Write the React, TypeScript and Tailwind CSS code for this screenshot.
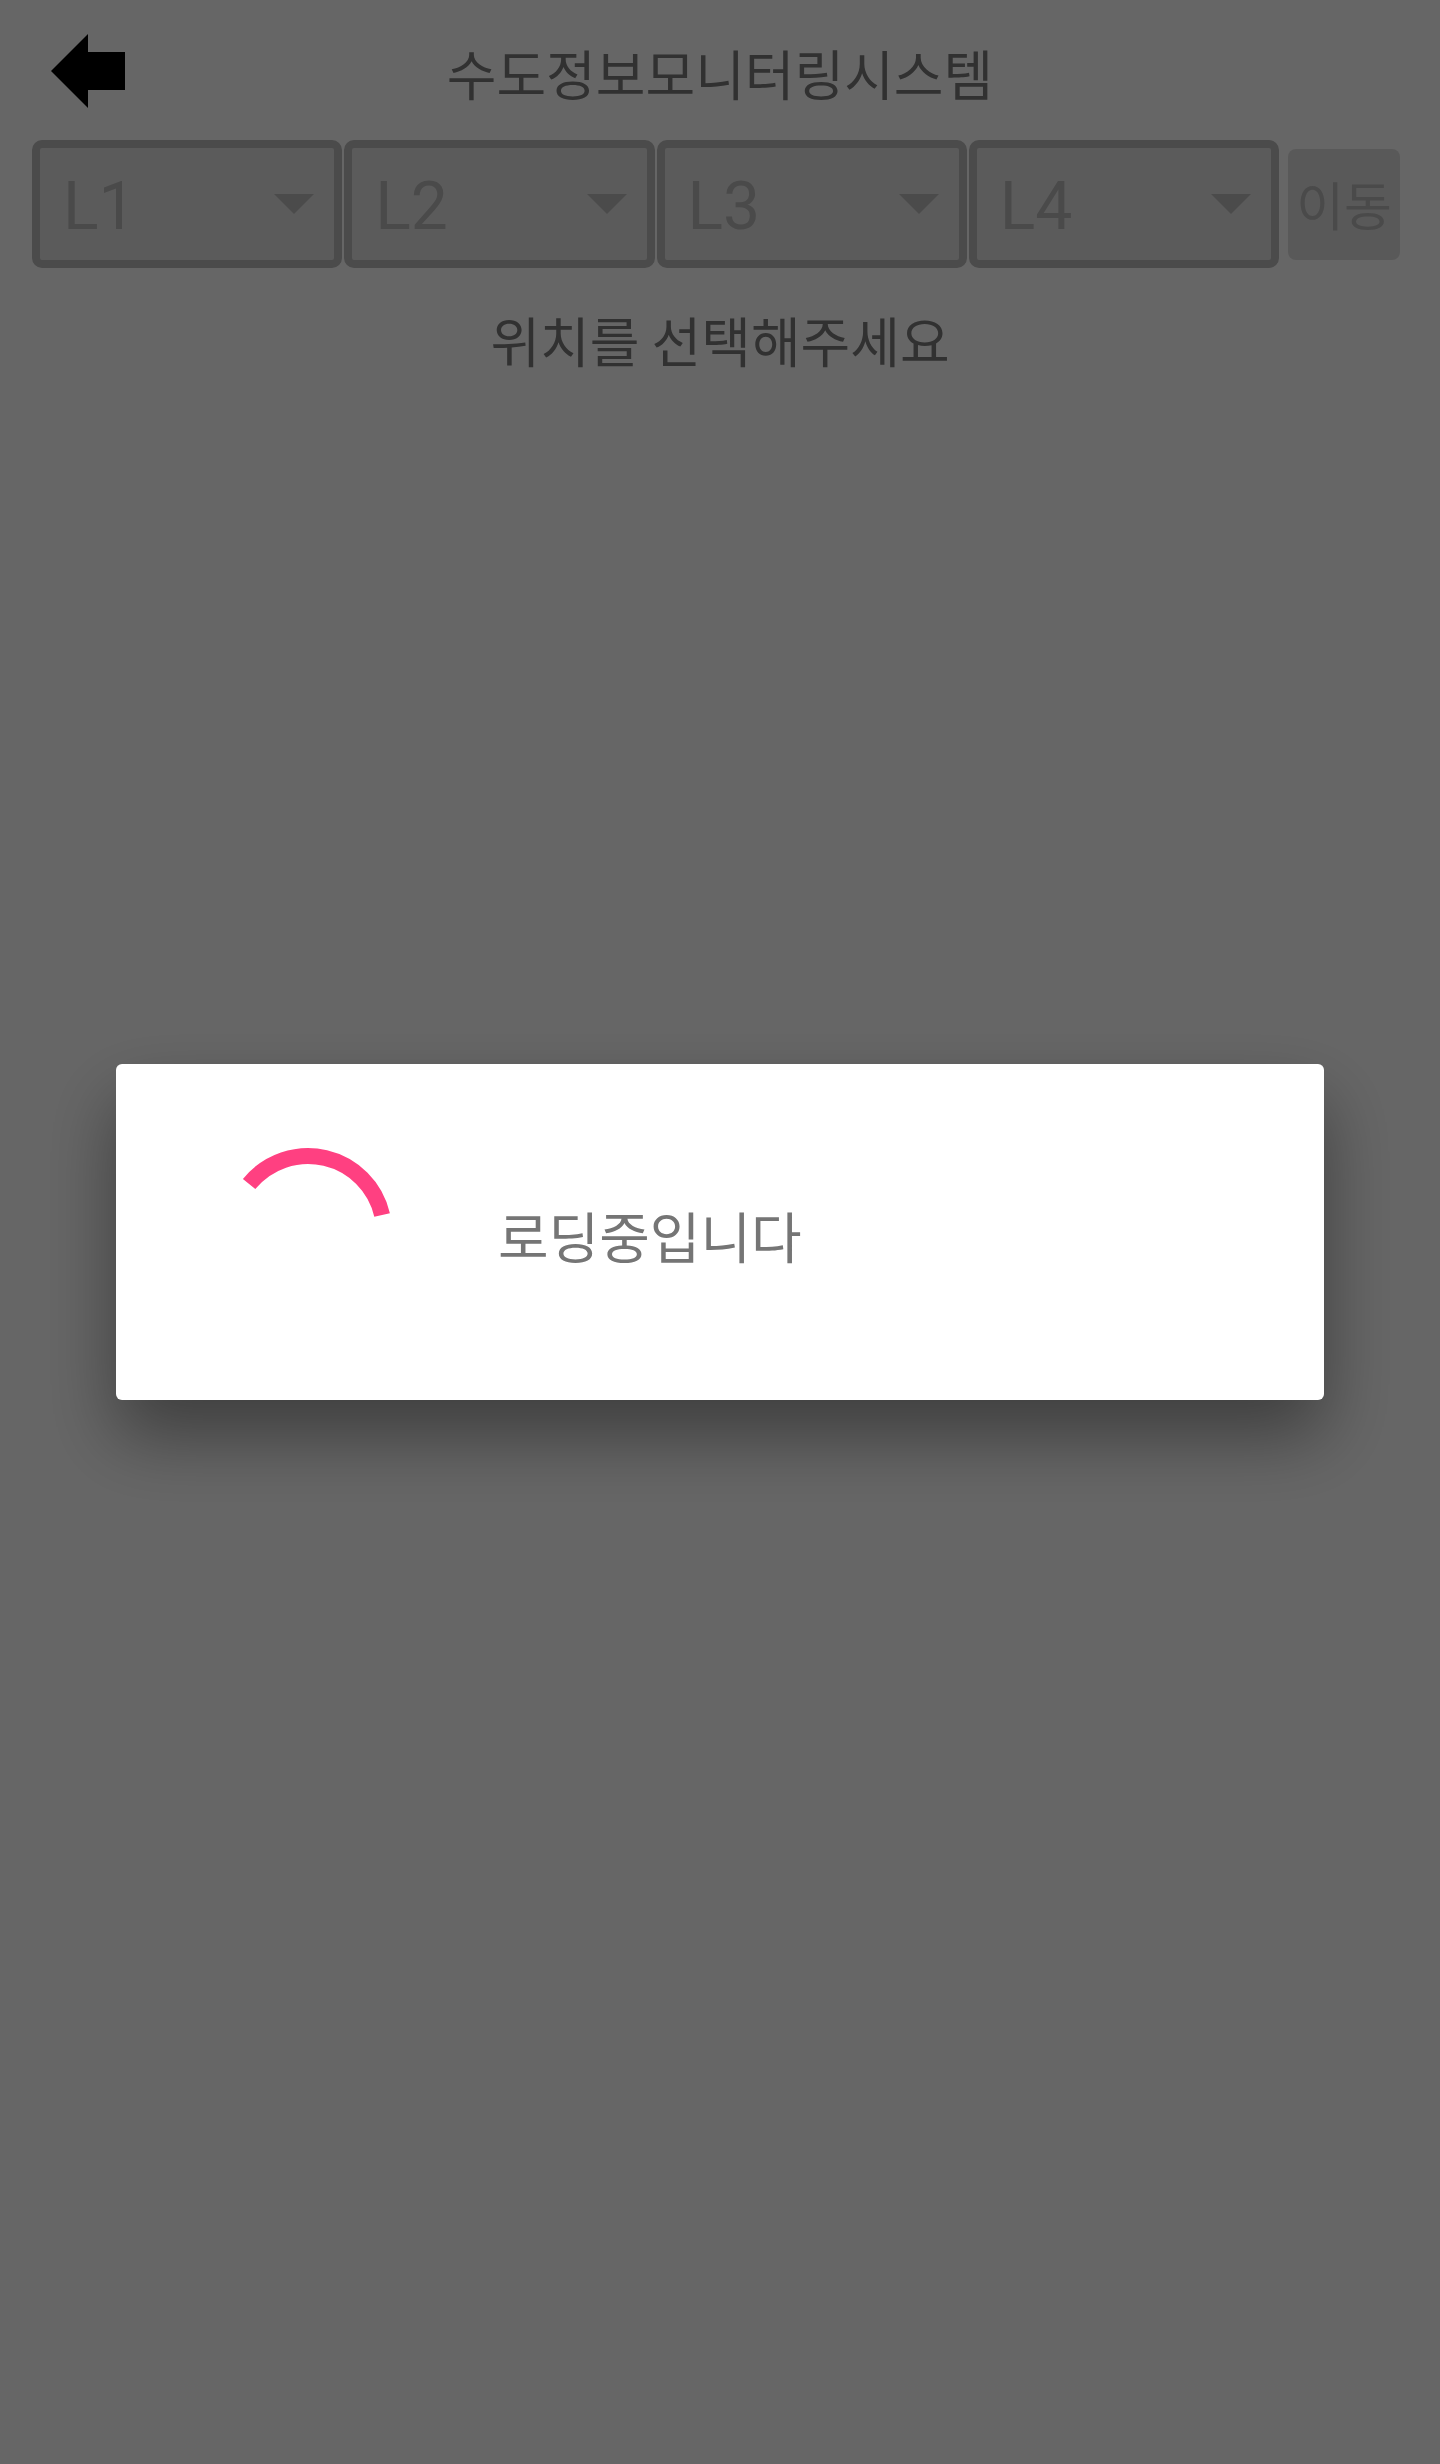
const levels = ['L1', 'L2', 'L3', 'L4'];

const BackArrow = () => (
  <svg width="74" height="74" viewBox="0 0 74 74" aria-hidden="true">
    <polygon points="0,37 37,0 37,18 74,18 74,56 37,56 37,74" fill="#000" />
  </svg>
);

const LevelSelect = ({ label }: { label: string }) => (
  <div className="flex-1 h-[128px] flex items-center justify-between pl-[23px] pr-[20px] border-8 border-[#bbbbbb] rounded-[10px] bg-[#e4e4e4]">
    <span className="pt-[5px] font-['Roboto',sans-serif] text-[66px] leading-none text-[#b9b9b9]">{label}</span>
    {/* spinner arrow */}
    <svg width="40" height="20" viewBox="0 0 40 20" aria-hidden="true">
      <polygon points="0,0 40,0 20,20" fill="#bbbbbb" />
    </svg>
  </div>
);

const Spinner = () => (
  <svg width="192" height="192" viewBox="0 0 192 192" aria-hidden="true">
    <path d="M37.1 48 A76 76 0 0 1 170.1 79" fill="none" stroke="#ff4081" strokeWidth="16" />
  </svg>
);

export default function App() {
  const kr = "font-['Noto_Sans_CJK_KR','Noto_Sans',sans-serif]";

  return (
    <div className={`relative min-h-screen bg-white ${kr}`}>
      <header className="h-[140px] pt-[6px] px-[51px] flex items-center">
        <button className="w-[74px] h-[74px] shrink-0 -mt-[4px]">
          <BackArrow />
        </button>
        <h1 className="flex-1 text-center text-[54px] leading-none text-[#7c7c7c] font-normal">수도정보모니터링시스템</h1>
        <div className="w-[74px] shrink-0" />
      </header>

      <div className="flex items-center pl-[32px] pr-[40px]">
        <div className="flex-1 flex gap-[2px]">
          {levels.map((l) => (
            <LevelSelect key={l} label={l} />
          ))}
        </div>
        <button className="ml-[9px] w-[112px] h-[111px] rounded-[8px] bg-[#dfdfdf] text-[#b9b9b9] text-[52px] leading-none flex items-center justify-center">
          이동
        </button>
      </div>

      <p className="mt-[42px] h-[60px] leading-[60px] text-center text-[54px] text-[#7c7c7c]">위치를 선택해주세요</p>

      {/* loading dialog */}
      <div className="fixed inset-0 bg-black/60 flex items-center justify-center">
        <div className="w-[1208px] h-[336px] bg-white rounded-[6px] shadow-[0_36px_72px_rgba(0,0,0,0.4)] flex items-center pl-[96px]">
          <Spinner />
          <span className="ml-[94px] pt-[4px] text-[55px] leading-none text-[#757575]">로딩중입니다</span>
        </div>
      </div>
    </div>
  );
}
